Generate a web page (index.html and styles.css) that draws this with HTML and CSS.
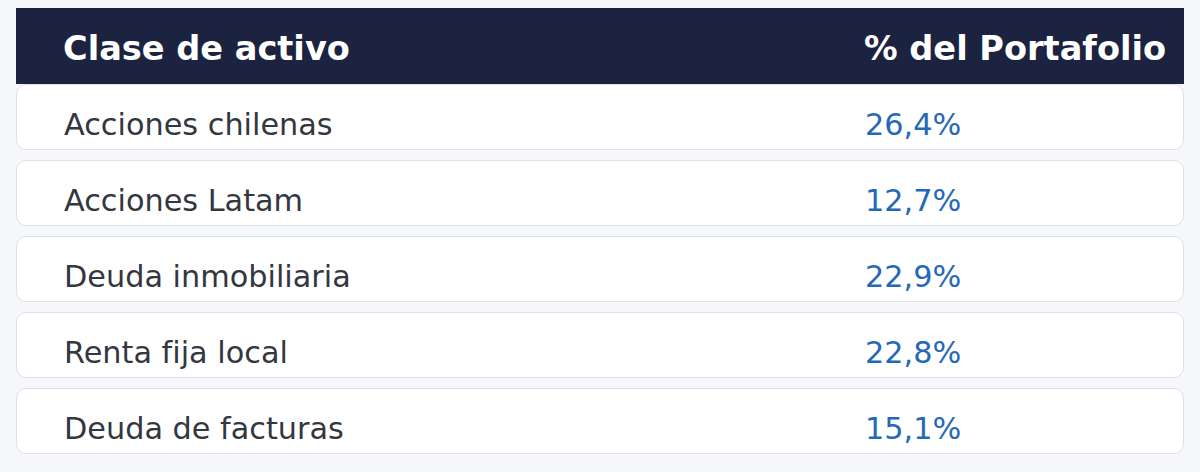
FILE: index.html
```html
<!DOCTYPE html>
<html lang="es">
<head>
<meta charset="utf-8">
<link rel="stylesheet" href="styles.css">
</head>
<body>
<div class="table">
  <div class="head">
    <div class="cell">Clase de activo</div>
    <div class="cell">% del Portafolio</div>
  </div>
  <div class="row"><div class="cell name">Acciones chilenas</div><div class="cell val">26,4%</div></div>
  <div class="row"><div class="cell name">Acciones Latam</div><div class="cell val">12,7%</div></div>
  <div class="row"><div class="cell name">Deuda inmobiliaria</div><div class="cell val">22,9%</div></div>
  <div class="row"><div class="cell name">Renta fija local</div><div class="cell val">22,8%</div></div>
  <div class="row"><div class="cell name">Deuda de facturas</div><div class="cell val">15,1%</div></div>
</div>
</body>
</html>
```
FILE: styles.css
```css
html, body {
  margin: 0;
  padding: 0;
  background: #f6f7fa;
  font-family: "DejaVu Sans", sans-serif;
}
.table {
  margin: 8px 16px 0 16px;
  display: flex;
  flex-direction: column;
  gap: 10px;
}
.head, .row {
  display: grid;
  grid-template-columns: 801px 1fr;
  padding-left: 47px;
  align-items: center;
}
.head {
  background: #1b2340;
  color: #ffffff;
  font-weight: bold;
  font-size: 33.6px;
  height: 76px;
  padding-top: 5px;
  box-sizing: border-box;
  margin-bottom: -10px;
}
.row {
  background: #ffffff;
  border: 1px solid #dde0e8;
  border-radius: 10px;
  height: 66px;
  box-sizing: border-box;
  font-size: 30.3px;
  padding-top: 14px;
}
.name { color: #333740; }
.val { color: #2468b8; }
```
